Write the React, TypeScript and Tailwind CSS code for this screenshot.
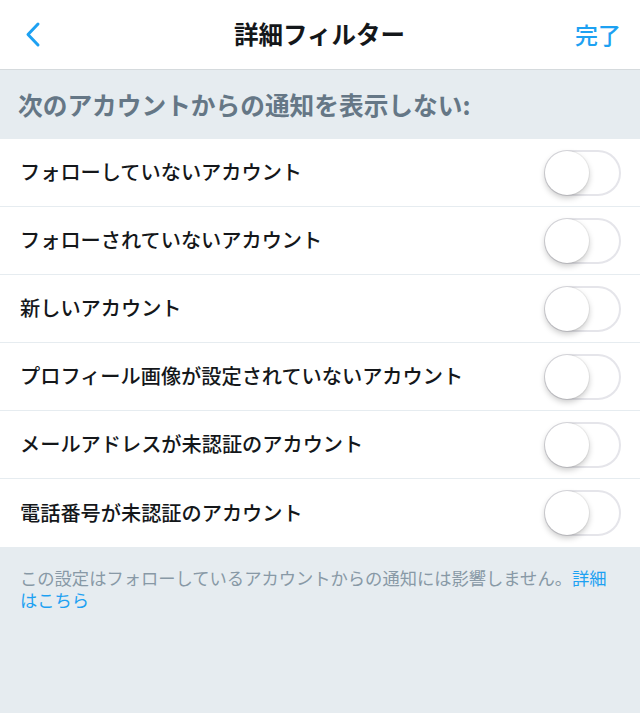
const rows = [
  "フォローしていないアカウント",
  "フォローされていないアカウント",
  "新しいアカウント",
  "プロフィール画像が設定されていないアカウント",
  "メールアドレスが未認証のアカウント",
  "電話番号が未認証のアカウント",
];

function Toggle() {
  return (
    <div className="relative h-[46px] w-[77px] rounded-full border-2 border-[#e5e5ea] bg-white">
      <div className="absolute left-[-1px] top-[-1px] h-[44px] w-[44px] rounded-full bg-white shadow-[0_3px_6px_rgba(0,0,0,0.22),0_0_0_1px_rgba(0,0,0,0.05)]" />
    </div>
  );
}

export default function App() {
  return (
    <main
      className="flex min-h-[713px] flex-col bg-[#e6ecf0]"
      style={{ fontFamily: '"Noto Sans CJK JP", "Noto Sans", sans-serif' }}
    >
      <header className="flex h-[70px] items-center justify-between border-b border-[#d5dadd] bg-white px-[19px]">
        <svg width="28" height="32" viewBox="0 0 28 32" fill="none" className="ml-[5px]">
          <path
            d="M14 5 L4 15.5 L14 26"
            stroke="#1da1f2"
            strokeWidth="3"
            strokeLinecap="round"
            strokeLinejoin="round"
          />
        </svg>
        <h1 className="ml-[12px] text-[24.5px] font-bold text-[#14171a]">詳細フィルター</h1>
        <button className="text-[23px] font-medium text-[#1da1f2]">完了</button>
      </header>

      <div className="flex h-[69px] items-center px-[18px]">
        <span className="text-[24.7px] font-bold text-[#657786]">
          次のアカウントからの通知を表示しない:
        </span>
      </div>

      <div className="flex flex-col bg-white">
        {rows.map((row, i) => (
          <div
            key={row}
            className={
              i < rows.length - 1
                ? "flex h-[68px] items-center justify-between border-b border-[#e6ecf0] pl-[20px] pr-[19px]"
                : "flex h-[68px] items-center justify-between pl-[20px] pr-[19px]"
            }
          >
            <span className="text-[20.2px] font-medium text-[#14171a]">{row}</span>
            <Toggle />
          </div>
        ))}
      </div>

      <p className="px-[20px] pt-[20px] text-[17.3px] leading-[22px] text-[#8899a6]">
        この設定はフォローしているアカウントからの通知には影響しません。
        <span className="text-[#1da1f2]">詳細はこちら</span>
      </p>
    </main>
  );
}
